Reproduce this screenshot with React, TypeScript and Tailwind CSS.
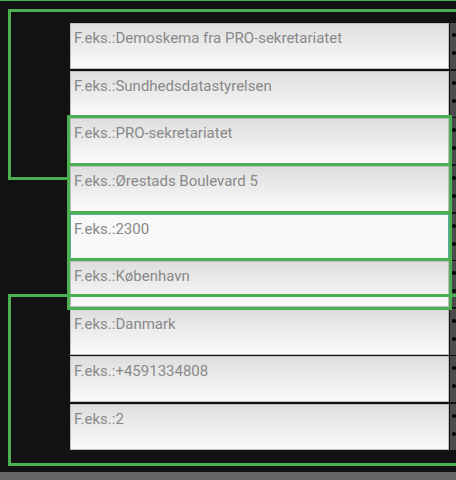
const fields = [
  { hint: "Demoskema fra PRO-sekretariatet" },
  { hint: "Sundhedsdatastyrelsen" },
  { hint: "PRO-sekretariatet", selected: true },
  { hint: "Ørestads Boulevard 5", selected: true },
  { hint: "2300", selected: true, focused: true },
  { hint: "København", selected: true },
  { hint: "Danmark" },
  { hint: "+4591334808" },
  { hint: "2" },
];

function Handle() {
  return (
    <div className="w-[6px] h-full ml-[1px] bg-[#4b4b4b] flex flex-col items-end pt-[10px] gap-[14px]">
      <span className="w-[4px] h-[4px] rounded-full bg-black" />
      <span className="w-[4px] h-[4px] rounded-full bg-black" />
    </div>
  );
}

export default function App() {
  return (
    <div className="w-[456px] h-[480px] bg-[#121212] flex flex-col overflow-hidden" style={{ fontFamily: "Roboto, 'Liberation Sans', sans-serif" }}>
      <div className="h-[1px] bg-[#4caf50] shrink-0" />
      <div className="relative h-[471px] shrink-0">
        {/* selection frame behind the form */}
        <div className="absolute left-[8px] top-[8px] w-[460px] h-[171px] border-[3px] border-[#4caf50]" />

        <div className="relative flex flex-col gap-[1.625px] pt-[22px] pl-[70px]">
          {fields.map((f, i) => (
            <div key={i} className="flex h-[46px]">
              <div
                className={
                  "w-[379px] h-full px-[3px] pt-[4px] text-[15px] leading-[20px] text-[#898989] border " +
                  (f.focused
                    ? "bg-[#f8f8f8] border-[#5aa9a6] "
                    : "bg-gradient-to-b from-[#dedede] to-[#fbfbfb] border-[#bdbdbd] ") +
                  (f.selected ? "outline-[3px] outline-solid outline-offset-0 outline-[#4caf50] relative" : "")
                }
              >
                F.eks.:{f.hint}
              </div>
              <Handle />
            </div>
          ))}
        </div>

        {/* selection frame over the form */}
        <div className="absolute left-[8px] top-[293px] w-[460px] h-[172px] border-[3px] border-[#4caf50] pointer-events-none" />
      </div>
      <div className="h-[8px] bg-[#666666] shrink-0" />
    </div>
  );
}
